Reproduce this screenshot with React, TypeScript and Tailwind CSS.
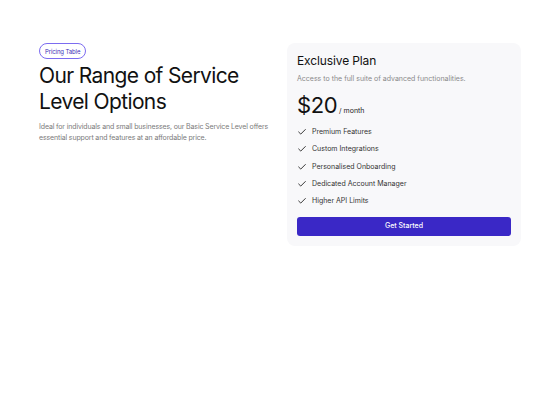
import { Check } from "lucide-react";

const FEATURES = [
  "Premium Features",
  "Custom Integrations",
  "Personalised Onboarding",
  "Dedicated Account Manager",
  "Higher API Limits",
];

export default function App() {
  return (
    <div
      className="min-h-[400px] w-[560px] bg-white text-[#111111]"
      style={{ fontFamily: "Inter, 'Noto Sans', sans-serif" }}
    >
      <div className="flex gap-[14px] pl-[39px] pr-[39px] pt-[43px]">
        {/* Left */}
        <div className="flex w-[234px] flex-col">
          <span className="self-start rounded-full border border-[#7c6cf0] px-[5px] py-[3.5px] text-[6px] leading-[7px] tracking-[-0.02em] text-[#3b2fb8]">
            Pricing Table
          </span>
          <h1 className="mt-[4px] text-[21px] font-normal leading-[26px] tracking-[-0.03em] text-[#111111]">
            Our Range of Service Level Options
          </h1>
          <p className="mt-[6px] text-[7px] leading-[11px] tracking-[-0.02em] text-[#7a7a7a]">
            Ideal for individuals and small businesses, our Basic Service Level offers essential support and
            features at an affordable price.
          </p>
        </div>

        {/* Card */}
        <div className="flex w-[234px] flex-col rounded-[8px] bg-[#f8f8fa] px-[10px] pb-[10px] pt-[11px]">
          <h2 className="text-[12px] leading-[14px] tracking-[-0.01em] text-[#111111]">Exclusive Plan</h2>
          <p className="mt-[6px] text-[7px] leading-[9px] text-[#8a8a8a]">
            Access to the full suite of advanced functionalities.
          </p>
          <div className="mt-[10px] flex items-end gap-[2px]">
            <span className="text-[22px] leading-[24px] tracking-[-0.02em] text-[#111111]">$20</span>
            <span className="mb-[2px] text-[7px] leading-[8px] text-[#222222]">/ month</span>
          </div>
          <ul className="mt-[10px] flex flex-col gap-[7.25px]">
            {FEATURES.map((f) => (
              <li key={f} className="flex items-center gap-[5px] text-[7px] leading-[10px] text-[#333333]">
                <Check className="h-[10px] w-[10px] shrink-0 text-[#111111]" strokeWidth={2} />
                {f}
              </li>
            ))}
          </ul>
          <button
            type="button"
            className="mt-[11px] h-[19px] w-full rounded-[3px] bg-[#3a28c6] text-[7px] font-medium text-white"
          >
            Get Started
          </button>
        </div>
      </div>
    </div>
  );
}
